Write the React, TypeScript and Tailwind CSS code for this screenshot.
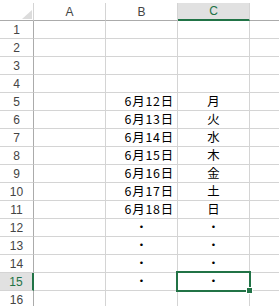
import React from "react";

const GREEN = "#217346";

const data: Record<number, [string, string]> = {
  5: ["6月12日", "月"],
  6: ["6月13日", "火"],
  7: ["6月14日", "水"],
  8: ["6月15日", "木"],
  9: ["6月16日", "金"],
  10: ["6月17日", "土"],
  11: ["6月18日", "日"],
  12: ["・", "・"],
  13: ["・", "・"],
  14: ["・", "・"],
  15: ["・", "・"],
};

const hdrFont = { fontFamily: '"Liberation Sans", Arial, sans-serif' };
const cjkFont = { fontFamily: '"Noto Sans CJK JP", "Noto Sans", sans-serif' };

export default function App() {
  const rows = Array.from({ length: 16 }, (_, i) => i + 1);
  return (
    <div className="relative w-[279px] h-[306px] overflow-hidden bg-white">
      <div className="h-[3px] bg-white" />
      <div className="grid grid-cols-[34px_72px_72px_72px_1fr]">
        {/* header row */}
        <div className="h-[18px] border-r border-b border-r-[#d4d4d4] border-b-[#ababab] flex justify-end items-end pr-[1px] pb-[1px]">
          <svg width="10" height="9" viewBox="0 0 10 9">
            <polygon points="10,0 10,9 0,9" fill="#dcdcdc" />
          </svg>
        </div>
        {["A", "B"].map((c) => (
          <div
            key={c}
            style={hdrFont}
            className="h-[18px] border-r border-b border-r-[#d4d4d4] border-b-[#ababab] flex items-center justify-center text-[12px] leading-[14px] text-[#444]"
          >
            {c}
          </div>
        ))}
        <div
          style={hdrFont}
          className="h-[18px] border-r border-b-2 border-r-[#d4d4d4] border-b-[#217346] bg-[#e1e1e1] flex items-center justify-center text-[12px] leading-[14px] text-[#217346]"
        >
          C
        </div>
        <div className="h-[18px] border-b border-b-[#ababab]" />

        {rows.map((r) => {
          const sel = r === 15;
          const d = data[r];
          const isDate = d && d[0].startsWith("6");
          return (
            <React.Fragment key={r}>
              <div
                style={hdrFont}
                className={
                  sel
                    ? "h-[18px] border-r-2 border-b border-r-[#217346] border-b-[#d4d4d4] bg-[#e1e1e1] flex items-center justify-center text-[12px] leading-[14px] text-[#217346]"
                    : "h-[18px] border-r border-b border-r-[#ababab] border-b-[#d4d4d4] flex items-center justify-center text-[12px] leading-[14px] text-[#444]"
                }
              >
                {r}
              </div>
              <div className="h-[18px] border-r border-b border-[#d4d4d4]" />
              <div
                style={cjkFont}
                className={
                  isDate
                    ? "h-[18px] border-r border-b border-[#d4d4d4] flex items-center justify-end pr-[3px] text-[12.4px] tracking-[0.8px] leading-none text-black"
                    : "h-[18px] border-r border-b border-[#d4d4d4] flex items-center justify-center text-[12.4px] leading-none text-black"
                }
              >
                {d ? d[0] : ""}
              </div>
              <div
                style={cjkFont}
                className="h-[18px] border-r border-b border-[#d4d4d4] flex items-center justify-center text-[12.4px] leading-none text-black"
              >
                {d ? d[1] : ""}
              </div>
              <div className="h-[18px] border-b border-[#d4d4d4]" />
            </React.Fragment>
          );
        })}
      </div>
      {/* selection box */}
      <div className="absolute left-[176px] top-[271px] w-[75px] h-[21px] border-2 border-[#217346]" />
      <div
        className="absolute left-[246px] top-[287px] w-[7px] h-[7px] border border-white"
        style={{ backgroundColor: GREEN }}
      />
    </div>
  );
}
